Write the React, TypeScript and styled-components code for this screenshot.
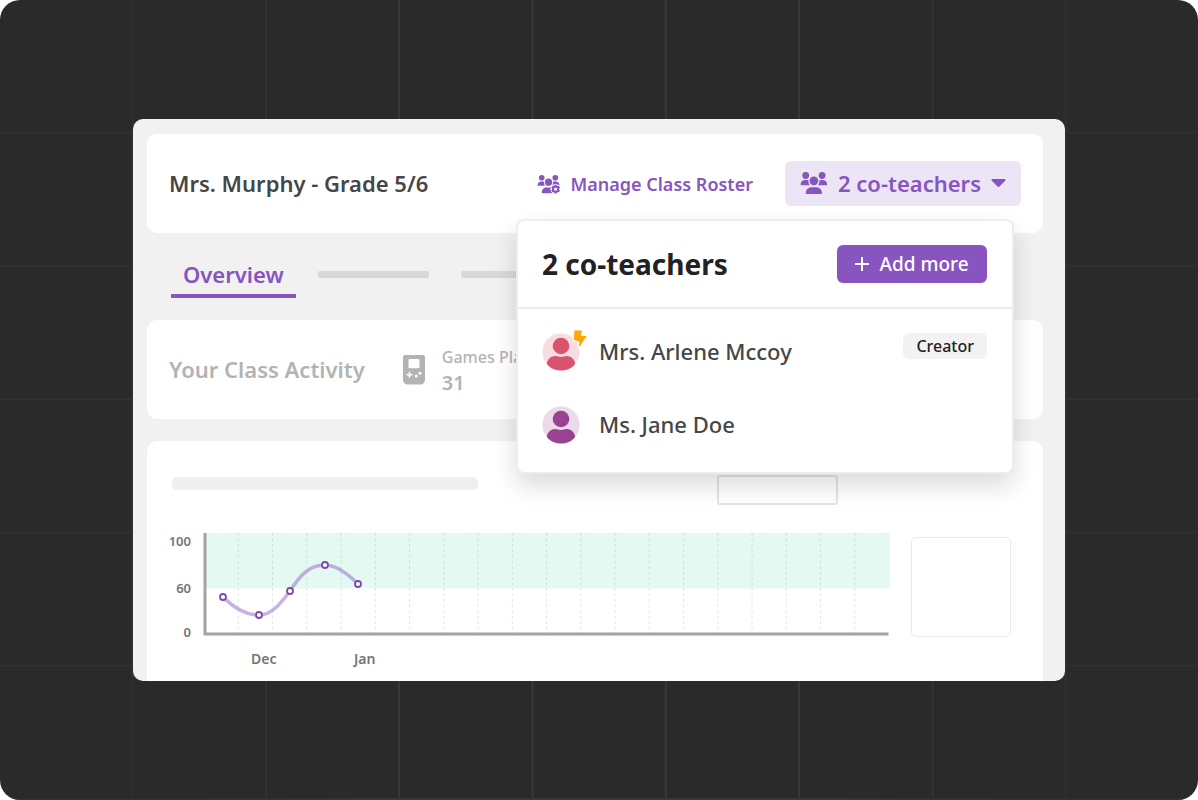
import React from "react";
import styled, { createGlobalStyle } from "styled-components";

const purple = "#8854c0";

const GlobalStyle = createGlobalStyle`
  * { box-sizing: border-box; }
  html, body, #root { min-height: 100vh; }
  body {
    margin: 0;
    background: #fff;
    font-family: "Noto Sans", "Open Sans", sans-serif;
    color: #464646;
  }
  button { font-family: inherit; cursor: pointer; }
  h1, h2, p, ul, dl, dd { margin: 0; padding: 0; }
`;

const Stage = styled.div`
  position: relative;
  min-height: 100vh;
  padding: 119px 133px;
  border-radius: 20px;
  background: #2a2a2a;
  overflow: hidden;
`;

const GridLines = styled.div`
  position: absolute;
  inset: 0;
  background-image:
    linear-gradient(to left, #3c3c3c 1px, #343434 1px, #343434 2px, transparent 2px),
    linear-gradient(to top, #3c3c3c 1px, #343434 1px, #343434 2px, transparent 2px);
  background-size: calc(400px / 3) calc(400px / 3);
  mask-image: linear-gradient(to right, rgba(0, 0, 0, 0.45) 15%, #000 35%, #000 65%, rgba(0, 0, 0, 0.45) 85%);
`;

const Panel = styled.main`
  position: relative;
  padding: 15px 22px 0 14px;
  border-radius: 10px;
  background: #f1f1f1;
  overflow: hidden;
`;

const Card = styled.section`
  display: flex;
  align-items: center;
  height: 99px;
  padding: 0 22px;
  border-radius: 10px;
  background: #fff;
`;

const ClassTitle = styled.h1`
  flex: 1;
  padding-bottom: 2px;
  font-size: 22px;
  line-height: 30px;
  font-weight: 600;
`;

const RosterLink = styled.a`
  display: flex;
  align-items: center;
  gap: 10px;
  margin-right: 32px;
  color: ${purple};
  font-size: 18px;
  line-height: 24px;
  font-weight: 600;
  text-decoration: none;
`;

const MenuAnchor = styled.div`
  position: relative;
`;

const TeachersButton = styled.button`
  display: flex;
  align-items: center;
  gap: 10px;
  height: 45px;
  padding: 0 15px 2px;
  border: 0;
  border-radius: 6px;
  background: #ece5f6;
  color: ${purple};
  font-size: 22px;
  font-weight: 600;
`;

const Popover = styled.div`
  position: absolute;
  z-index: 2;
  top: 58px;
  right: 7px;
  width: 498px;
  border: 2px solid #ededed;
  border-radius: 8px;
  background: #fff;
  box-shadow: 0 12px 24px rgba(0, 0, 0, 0.14);
`;

const PopoverHeader = styled.header`
  display: flex;
  align-items: center;
  justify-content: space-between;
  height: 88px;
  padding: 0 25px 0 24px;
  border-bottom: 2px solid #ededed;
`;

const PopoverTitle = styled.h2`
  color: #222;
  font-size: 28px;
  line-height: 38px;
  font-weight: 700;
`;

const AddButton = styled.button`
  display: flex;
  align-items: center;
  justify-content: center;
  gap: 10px;
  width: 150px;
  height: 38px;
  padding: 0;
  border: 0;
  border-radius: 6px;
  background: ${purple};
  color: #fff;
  font-size: 19px;
  font-weight: 500;
`;

const TeacherList = styled.ul`
  display: flex;
  flex-direction: column;
  gap: 35px;
  padding: 24px 25px 28px 24px;
  list-style: none;
`;

const TeacherRow = styled.li`
  display: flex;
  align-items: center;
  gap: 19px;
  height: 38px;
`;

const TeacherName = styled.span`
  flex: 1;
  padding-bottom: 2px;
  font-size: 22px;
  line-height: 30px;
  font-weight: 500;
`;

const Badge = styled.span`
  align-self: flex-start;
  padding: 0 13px;
  border-radius: 6px;
  background: #f2f2f2;
  color: #222;
  font-size: 16px;
  line-height: 26px;
  font-weight: 500;
`;

const Tabs = styled.nav`
  display: flex;
  align-items: center;
  gap: 32px;
  height: 83px;
  margin-bottom: 4px;
  padding: 0 24px;
`;

const Tab = styled.a`
  margin-right: -10px;
  padding: 5px 12px 2px;
  border-bottom: 4px solid ${purple};
  color: ${purple};
  font-size: 22px;
  line-height: 36px;
  font-weight: 600;
  text-decoration: none;
`;

const Placeholder = styled.div<{ $width: number; $height: number; $tone: string }>`
  width: ${(p) => p.$width}px;
  height: ${(p) => p.$height}px;
  border-radius: ${(p) => (p.$height > 10 ? 5 : 2)}px;
  background: ${(p) => p.$tone};
`;

const ActivityTitle = styled.h2`
  margin-right: 38px;
  padding-bottom: 2px;
  color: #b3b3b3;
  font-size: 22px;
  line-height: 30px;
  font-weight: 600;
`;

const Stat = styled.dl`
  margin-left: 17px;
  color: #b3b3b3;
  font-size: 16px;
  line-height: 25px;
  font-weight: 500;
  dd {
    font-size: 20px;
    font-weight: 600;
  }
`;

const ChartCard = styled.section`
  display: grid;
  grid-template-columns: minmax(0, 1fr) 100px;
  column-gap: 21px;
  row-gap: 28px;
  margin-top: 22px;
  padding: 34px 32px 8px 22px;
  border-radius: 10px 10px 0 0;
  background: #fff;
`;

const ChartHeader = styled.div`
  grid-column: 1;
  display: flex;
  justify-content: space-between;
  padding: 0 52px 0 3px;
`;

const HeaderBar = styled.div`
  padding-top: 2px;
`;

const OutlineBox = styled.div`
  width: 121px;
  height: 30px;
  border: 2px solid #e4e4e4;
  border-radius: 3px;
`;

const SideBox = styled.div`
  height: 100px;
  margin-top: 4px;
  border: 1px solid #ebebeb;
  border-radius: 5px;
`;

const ChartSvg = styled.svg`
  grid-column: 1;
  display: block;
  width: 100%;
  font-size: 13px;
  font-weight: 600;
  fill: #757575;
`;

function People() {
  return (
    <>
      <circle cx="5.7" cy="4.5" r="3.4" />
      <circle cx="22.1" cy="4.5" r="3.4" />
      <circle cx="13.9" cy="9.8" r="4.4" />
      <path d="M.6 13.8c0-3 2-4.900 4.600-4.900h1.500c.6 0 1.200.1 1.700.4-.2 1.800.2 3.400 1.300 4.900H1.100c-.3 0-.5-.1-.5-.4z" />
      <path d="M27.2 13.8c0-3-2-4.900-4.600-4.900h-1.500c-.6 0-1.200.1-1.700.4.2 1.800-.2 3.400-1.300 4.900h8.600c.3 0 .5-.1.5-.4z" />
      <path d="M5.8 22.3c0-3.700 2.500-6 5.800-6h4.600c3.300 0 5.800 2.300 5.800 6 0 .5-.3.8-.8.8H6.600c-.5 0-.8-.3-.8-.8z" />
    </>
  );
}

function PeopleIcon() {
  return (
    <svg width="28" height="24" viewBox="0 0 28 24" fill="currentColor" aria-hidden="true">
      <People />
    </svg>
  );
}

function RosterIcon() {
  const teeth = [0, 60, 120, 180, 240, 300];
  return (
    <svg width="24" height="20" viewBox="0 0 29 24" fill="currentColor" aria-hidden="true">
      <People />
      <circle cx="22.5" cy="18.2" r="6.2" fill="#fff" />
      {teeth.map((a) => (
        <rect key={a} x="21.1" y="12.8" width="2.8" height="3" rx=".5" transform={`rotate(${a} 22.5 18.2)`} />
      ))}
      <circle cx="22.5" cy="18.2" r="3.1" fill="none" stroke="currentColor" strokeWidth="2.4" />
    </svg>
  );
}

function Avatar({ color, tint, creator }: { color: string; tint: string; creator?: boolean }) {
  const clip = `face-${color.slice(1)}`;
  return (
    <svg width="38" height="38" viewBox="0 0 38 38" overflow="visible" aria-hidden="true">
      <clipPath id={clip}>
        <circle cx="19" cy="19" r="18.6" />
      </clipPath>
      <circle cx="19" cy="19" r="18.6" fill={tint} />
      <circle cx="19" cy="13" r="8.3" fill={color} />
      <path
        clipPath={`url(#${clip})`}
        fill={color}
        d="M4.800 31c.6-4.800 4-8 8.700-8 2 0 3.200.9 5.500.9s3.500-.9 5.500-.9c4.700 0 8.100 3.200 8.700 8l-6 8H11z"
      />
      {creator && (
        <path
          d="M32.300-2.600h7.700l-1.300 5.300 6 .4L37 14.400l.3-6-5.300-1.300z"
          fill="#ffa60a"
          stroke="#fff"
          strokeWidth="2.4"
          strokeLinejoin="round"
          paintOrder="stroke"
        />
      )}
    </svg>
  );
}

function ConsoleIcon() {
  return (
    <svg width="22" height="30" viewBox="0 0 22 30" aria-hidden="true">
      <path d="M2 0h18a2 2 0 0 1 2 2v22.500c0 3-2 5-5 5H5c-3 0-5-2-5-5V2a2 2 0 0 1 2-2z" fill="#b3b3b3" />
      <rect x="5.5" y="4" width="11" height="9.2" rx="1" fill="#fff" />
      <path d="M6.500 17.200v5M4 19.700h5" stroke="#fff" strokeWidth="1.6" strokeLinecap="round" />
      <circle cx="13.3" cy="21" r="1.5" fill="#fff" />
      <circle cx="17" cy="18.2" r="1.5" fill="#fff" />
    </svg>
  );
}

const points = [
  [54, 64],
  [90, 82],
  [121, 58],
  [156, 32],
  [189, 51],
];

function ActivityChart() {
  const gridXs = Array.from({ length: 19 }, (_, i) => 69.3 + i * 34.25);
  return (
    <ChartSvg viewBox="0 0 721 140" role="img" aria-label="Class activity">
      <rect x="37" y="0" width="684" height="55.5" fill="#e5f9f3" />
      {gridXs.map((x) => (
        <path key={x} d={`M${x} 0V100`} stroke="#000" strokeOpacity=".1" strokeDasharray="3 2.5" />
      ))}
      <path d="M36 0V101H719.500" fill="none" stroke="#a3a3a3" strokeWidth="3" />
      <path
        d="M54 64C66 76 78 82 90 82C103 82 112 70 121 58C132 41 141 32 156 32C168 32 179 41 189 51"
        fill="none"
        stroke={purple}
        strokeOpacity=".45"
        strokeWidth="3.5"
      />
      {points.map(([x, y]) => (
        <circle key={x} cx={x} cy={y} r="3" fill="#fff" stroke="#7a4ca8" strokeWidth="1.8" />
      ))}
      <g textAnchor="end">
        <text x="22" y="13">100</text>
        <text x="22" y="60">60</text>
        <text x="22" y="104">0</text>
      </g>
      <g fontSize="14">
        <text x="82" y="131">Dec</text>
        <text x="185" y="131">Jan</text>
      </g>
    </ChartSvg>
  );
}

export default function App() {
  return (
    <>
      <GlobalStyle />
      <Stage>
        <GridLines />
        <Panel>
          <Card>
            <ClassTitle>Mrs. Murphy - Grade 5/6</ClassTitle>
            <RosterLink href="#roster">
              <RosterIcon />
              Manage Class Roster
            </RosterLink>
            <MenuAnchor>
              <TeachersButton type="button" aria-expanded="true">
                <PeopleIcon />
                2 co-teachers
                <svg width="15" height="10" viewBox="0 0 15 10" fill="currentColor" aria-hidden="true">
                  <path d="M1.500 1h12c1 0 1.400 1 .7 1.700L8.500 8.500c-.6.600-1.400.6-2 0L.8 2.700C.1 2 .5 1 1.500 1z" />
                </svg>
              </TeachersButton>
              <Popover>
                <PopoverHeader>
                  <PopoverTitle>2 co-teachers</PopoverTitle>
                  <AddButton type="button">
                    <svg width="14" height="14" viewBox="0 0 14 14" stroke="currentColor" strokeWidth="2" aria-hidden="true">
                      <path d="M7 0v14M0 7h14" />
                    </svg>
                    Add more
                  </AddButton>
                </PopoverHeader>
                <TeacherList>
                  <TeacherRow>
                    <Avatar color="#d9536f" tint="#f6dde2" creator />
                    <TeacherName>Mrs. Arlene Mccoy</TeacherName>
                    <Badge>Creator</Badge>
                  </TeacherRow>
                  <TeacherRow>
                    <Avatar color="#9a4292" tint="#ebdaea" />
                    <TeacherName>Ms. Jane Doe</TeacherName>
                  </TeacherRow>
                </TeacherList>
              </Popover>
            </MenuAnchor>
          </Card>
          <Tabs>
            <Tab href="#overview">Overview</Tab>
            <Placeholder $width={111} $height={7} $tone="#d8d8d8" />
            <Placeholder $width={111} $height={7} $tone="#d8d8d8" />
          </Tabs>
          <Card>
            <ActivityTitle>Your Class Activity</ActivityTitle>
            <ConsoleIcon />
            <Stat>
              <dt>Games Played</dt>
              <dd>31</dd>
            </Stat>
          </Card>
          <ChartCard>
            <ChartHeader>
              <HeaderBar>
                <Placeholder $width={306} $height={13} $tone="#efefef" />
              </HeaderBar>
              <OutlineBox />
            </ChartHeader>
            <ActivityChart />
            <SideBox />
          </ChartCard>
        </Panel>
      </Stage>
    </>
  );
}
